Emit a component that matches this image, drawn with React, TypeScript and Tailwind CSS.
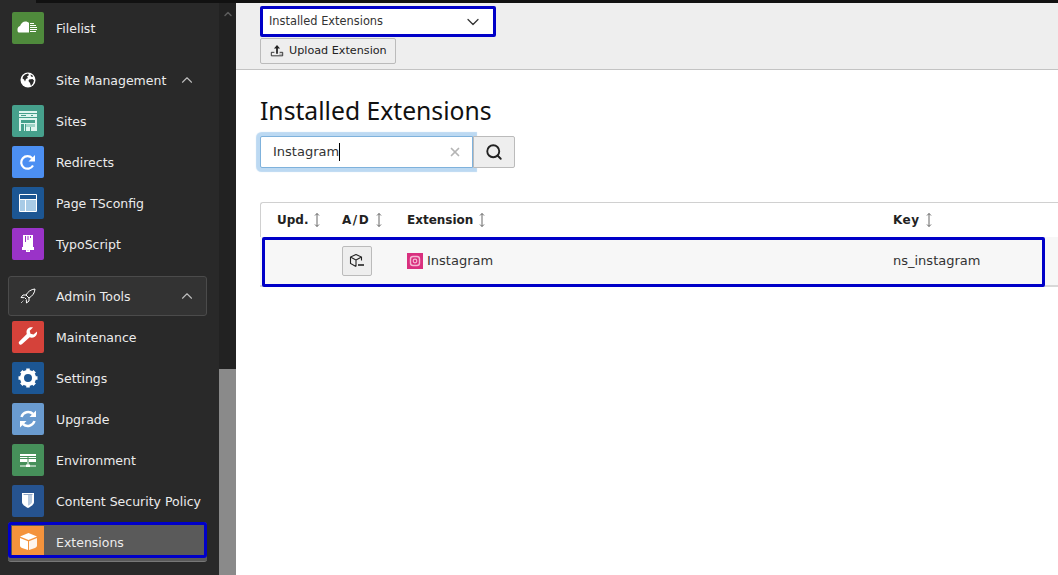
import React from "react";
import { ChevronDown, ChevronUp, Search, X } from "lucide-react";

const FilelistIcon = () => (
  <svg viewBox="0 0 32 32" className="size-8">
    <path fill="#fff" d="M7 20.500c-1.500 0-1.500-1.500-1.500-3 0-2 1-3 2.500-3.500C9 11.500 11 9.500 13.500 9.500c1.500 0 2.500.5 3.500 1.500v9.500z" />
    <path stroke="#fff" strokeWidth="1" d="M18 11.500h4M18 13.500h6M18 15.500h7M18 17.500h7M18 19.500h6" />
  </svg>
);

const SitesIcon = () => (
  <svg viewBox="0 0 32 32" className="size-8">
    <path fill="#dff5ef" d="M7 6h18v6H7z" />
    <path stroke="#46a08c" strokeWidth="1" d="M7 8.500h18M9 10.500h5M19 10.500h2" />
    <path fill="#dff5ef" d="M7 13h18v13H7z" />
    <path fill="#46a08c" d="M9 15h14v3H9zM9 19h3v7H9zM13 19h1v7h-1z" />
    <path fill="#9fd4c8" d="M14 19h9v3h-9z" />
    <path fill="#46a08c" d="M18 22h1v4h-1z" />
  </svg>
);

const RedirectsIcon = () => (
  <svg viewBox="0 0 32 32" className="size-8" fill="none">
    <path stroke="#fff" strokeWidth="2.200" d="M21 19.500a6.300 6.300 0 1 1-.8-7.300" />
    <path fill="#fff" d="M23 9v6.500h-6.500z" />
  </svg>
);

const TsconfigIcon = () => (
  <svg viewBox="0 0 32 32" className="size-8" fill="none">
    <path fill="#a8cbe6" d="M8 13h5v11H8zM14 13h10v11H14z" />
    <path stroke="#fff" strokeWidth="1" d="M7.500 7.500h17v17h-17zM7.500 12.500h17M13.500 12.500v12" />
  </svg>
);

const TypoScriptIcon = () => (
  <svg viewBox="0 0 32 32" className="size-8">
    <path fill="#fff" d="M11 7h10v12h1v3h-4v2h-4v-2h-4v-3h1z" />
    <path fill="#9a33c8" d="M13 8h1v6h-1zM15.500 8h1v4h-1zM18 8h1v2h-1zM15.500 22.500h1v.5h-1z" />
  </svg>
);

const MaintenanceIcon = () => (
  <svg viewBox="0 0 32 32" className="size-8">
    <path fill="#fff" d="M25 10.500l-3.500 3-3-.8-.8-3 3.300-3.200c-3-1-6.500 1.200-6.500 4.500 0 .8.100 1.300.3 1.900L7.300 20.500c-1.700 1.600.8 4.400 2.600 2.800l7.800-7c2.800 1 6.300-.3 7.200-3.300.2-.7.200-1.700.1-2.500z" />
  </svg>
);

const SettingsIcon = () => (
  <svg viewBox="0 0 32 32" className="size-8" fill="none">
    <circle cx="16" cy="16" r="6" stroke="#fff" strokeWidth="4" />
    <path stroke="#fff" strokeWidth="3.500" d="M16 6.500v3M16 22.500v3M6.500 16h3M22.500 16h3M9.300 9.300l2 2M20.700 20.700l2 2M22.700 9.300l-2 2M11.300 20.700l-2 2" />
  </svg>
);

const UpgradeIcon = () => (
  <svg viewBox="0 0 32 32" className="size-8" fill="none">
    <path stroke="#fff" strokeWidth="2.500" d="M9.500 14a7 7 0 0 1 11.500-3M22.500 18a7 7 0 0 1-11.500 3" />
    <path fill="#fff" d="M24 7.500v6.500h-6.500zM8 24.500V18h6.500z" />
  </svg>
);

const EnvironmentIcon = () => (
  <svg viewBox="0 0 32 32" className="size-8">
    <path fill="#fff" d="M8 10h16v8H8z" />
    <path stroke="#46905a" strokeWidth="1" d="M8 12.500h16M8 14.500h16M16 12v6" />
    <path fill="#fff" d="M15.500 18h1v3h-1zM8 21.500h16v1H8zM14 20.500h4v2.500h-4z" />
  </svg>
);

const ShieldIcon = () => (
  <svg viewBox="0 0 32 32" className="size-8">
    <path fill="#fff" d="M10 8h12v9c0 2.500-3 4.500-6 6-3-1.500-6-3.500-6-6z" />
    <path fill="#b9cbe0" d="M16 10h4v7c0 1.300-2 2.700-4 3.700z" />
    <path fill="#26538f" d="M11.500 9.500h9v.5h-9z" />
  </svg>
);

const ExtensionsIcon = () => (
  <svg viewBox="0 0 32 32" className="size-8">
    <path fill="#fff" d="M16.500 7l8.500 3.500-8.500 3.500L8 10.500z" />
    <path fill="#fff" d="M8 12l8 3.300V24l-6-2c-1.200-.4-2-1.300-2-2.500z" />
    <path fill="#fff" opacity=".9" d="M25 12l-8 3.300V24l6-2c1.200-.4 2-1.300 2-2.500z" />
  </svg>
);

const GlobeIcon = () => (
  <svg viewBox="0 0 16 16" className="size-4">
    <circle cx="8" cy="8" r="7.500" fill="#fff" />
    <path fill="#292929" d="M3 4.500l2-2 3-1 1 1.500-2 1.500 1 1.500-2 1-1 2.500-1-2-1.500-1zM9 7.500l3.500-.5 1.500 1.500-1 3-2 2.500-1-3-1.500-2zM10.500 2.500l2 1 .5 1.500-2-.5z" />
  </svg>
);

const RocketIcon = () => (
  <svg viewBox="0 0 16 16" className="size-4" fill="none" stroke="#fff" strokeWidth="1">
    <path d="M15 1c-4 .3-7 2.500-9 6l3 3c3.500-2 5.700-5 6-9zM6 7H3L1 9.500l3 .2M9 10v3l-2.500 2-.2-3M4.500 9.500l2 2" />
    <path strokeDasharray="1 1" d="M1 15l3-3" />
  </svg>
);

const UploadIcon = () => (
  <svg viewBox="0 0 16 16" className="size-3.5 shrink-0">
    <path fill="#222" d="M8 1l3.500 4H9v6H7V5H4.500z" />
    <path fill="none" stroke="#222" d="M5 9.500H1.500v4h13v-4H11" />
    <path fill="#222" d="M11 11h1v1h-1zM13 11h1v1h-1z" />
  </svg>
);

const SortIcon = () => (
  <svg viewBox="0 0 8 16" className="ml-[5px] h-4 w-2" fill="none" stroke="#666" strokeWidth="1">
    <path d="M4 1.500v13M2 3.500l2-2 2 2M2 12.500l2 2 2-2" />
  </svg>
);

const DeactivateIcon = () => (
  <svg viewBox="0 0 16 16" className="size-4" fill="none" stroke="#222" strokeWidth="1.100">
    <path d="M7 1.500l5.500 2.500v3.500M7 1.500L1.500 4v6.500L7 13.500M1.500 4L7 7v6.500M7 7l5.500-3" />
    <path strokeWidth="1.600" d="M9 12h6" />
  </svg>
);

const InstagramIcon = () => (
  <svg viewBox="0 0 16 16" className="size-4 shrink-0">
    <rect width="16" height="16" fill="#d9307f" />
    <rect x="3.500" y="3.500" width="9" height="9" rx="2.500" fill="none" stroke="#f5b8d3" strokeWidth="1.400" />
    <circle cx="8" cy="8" r="1.800" fill="none" stroke="#f5b8d3" strokeWidth="1.200" />
  </svg>
);

type ModuleItem = { label: string; bg: string; icon: React.ReactNode };

const siteModules: ModuleItem[] = [
  { label: "Sites", bg: "bg-[#46a08c]", icon: <SitesIcon /> },
  { label: "Redirects", bg: "bg-[#4c8ff2]", icon: <RedirectsIcon /> },
  { label: "Page TSconfig", bg: "bg-[#1c5693]", icon: <TsconfigIcon /> },
  { label: "TypoScript", bg: "bg-[#9a33c8]", icon: <TypoScriptIcon /> },
];

const adminModules: ModuleItem[] = [
  { label: "Maintenance", bg: "bg-[#d5423a]", icon: <MaintenanceIcon /> },
  { label: "Settings", bg: "bg-[#1c5693]", icon: <SettingsIcon /> },
  { label: "Upgrade", bg: "bg-[#6a9bcf]", icon: <UpgradeIcon /> },
  { label: "Environment", bg: "bg-[#46905a]", icon: <EnvironmentIcon /> },
  { label: "Content Security Policy", bg: "bg-[#26538f]", icon: <ShieldIcon /> },
];

const ModuleRow = ({ item }: { item: ModuleItem }) => (
  <div className="flex h-10 items-center gap-3 pl-1">
    <div className={`size-8 shrink-0 rounded-[2px] ${item.bg}`}>{item.icon}</div>
    <span className="pt-[2px] text-[12.5px] whitespace-nowrap text-[#ececec]">{item.label}</span>
  </div>
);

const GroupHeader = ({ label, icon, boxed }: { label: string; icon: React.ReactNode; boxed?: boolean }) => (
  <div
    className={`mt-[11px] flex h-10 items-center rounded-[3px] border pl-[3px] ${
      boxed ? "border-[#4b4b4b] bg-[#333333]" : "border-transparent"
    }`}
  >
    <div className="flex size-8 shrink-0 items-center justify-center">{icon}</div>
    <span className="ml-3 pt-[2px] text-[12.5px] text-[#ececec]">{label}</span>
    <ChevronUp className="mr-[10px] ml-auto size-[18px] text-[#bdbdbd]" strokeWidth={1.5} />
  </div>
);

const Sidebar = () => (
  <aside className="flex w-[236px] shrink-0 bg-[#222222]">
    <nav className="flex w-[219px] flex-col gap-px overflow-hidden bg-[#292929] pt-2 pr-3 pl-2">
      <div className="flex h-10 items-center gap-3 pl-1">
        <div className="size-8 shrink-0 rounded-[2px] bg-[#4f8a3c]">
          <FilelistIcon />
        </div>
        <span className="pt-[2px] text-[12.5px] text-[#ececec]">Filelist</span>
      </div>
      <GroupHeader label="Site Management" icon={<GlobeIcon />} />
      {siteModules.map((item) => (
        <ModuleRow key={item.label} item={item} />
      ))}
      <GroupHeader label="Admin Tools" icon={<RocketIcon />} boxed />
      {adminModules.map((item) => (
        <ModuleRow key={item.label} item={item} />
      ))}
      <div className="relative flex h-10 items-center gap-3 rounded-[3px] border-b border-[#777777] bg-[#5a5a5a] pl-1">
        <div className="mt-1 h-[29px] w-8 shrink-0 self-start bg-[#f4933c]">
          <ExtensionsIcon />
        </div>
        <span className="pt-1 text-[12.5px] text-[#ececec]">Extensions</span>
        <div className="absolute top-0 right-0 left-0 h-9 rounded-[3px] border-[3px] border-[#0000c8]" />
      </div>
    </nav>
    <div className="flex w-[17px] flex-col bg-[#222222]">
      <div className="h-[369px] shrink-0 pt-2 pl-[3px]">
        <ChevronUp className="size-3 text-[#5c5c5c]" strokeWidth={3} />
      </div>
      <div className="flex-1 bg-[#8a8a8a]" />
    </div>
  </aside>
);

const TopBar = () => (
  <div className="flex h-[67px] flex-col border-b border-[#c3c3c3] bg-[#eeeeee] pt-[3px] pl-6">
    <div className="flex h-[31px] w-[236px] items-center justify-between rounded-[2px] border-[3px] border-[#0000c8] bg-white pr-[10px] pl-[6px] text-[11.4px] text-[#333333]">
      <span>Installed Extensions</span>
      <ChevronDown className="size-5 text-[#333333]" strokeWidth={1.5} />
    </div>
    <button className="mt-px flex h-[26px] w-[136px] items-center gap-[5px] rounded-[2px] border border-[#bbbbbb] bg-[#eeeeee] pl-[9px] text-[11.2px] text-[#222222]">
      <UploadIcon />
      <span>Upload Extension</span>
    </button>
  </div>
);

const SearchBox = () => (
  <div className="mt-2 flex h-8 w-[255px]">
    <div className="flex w-[213px] items-center justify-between rounded-l-[2px] border border-[#7fb2dc] bg-white pr-[10px] pl-[12px] text-[13px] text-[#333333] shadow-[0_0_1px_4px_#bcd9f2]">
      <span className="border-r border-black leading-[18px]">Instagram</span>
      <X className="size-[14px] text-[#b5b5b5]" strokeWidth={3} />
    </div>
    <button className="relative flex w-[42px] items-center justify-center rounded-r-[2px] border border-[#bbbbbb] bg-[#eeeeee]">
      <Search className="size-[18px] text-[#222222]" strokeWidth={2.5} />
    </button>
  </div>
);

const HeaderCell = ({ label, className }: { label: string; className: string }) => (
  <div className={`flex items-center text-[12px] font-bold text-[#222222] ${className}`}>
    <span>{label}</span>
    <SortIcon />
  </div>
);

const ExtensionTable = () => (
  <div className="mt-[34px] rounded-tl-[3px] border-t border-l border-[#d0d0d0]">
    <div className="flex h-[34px] items-center pl-4">
      <HeaderCell label="Upd." className="w-[65px]" />
      <HeaderCell label="A/D" className="w-[65px] tracking-[1.5px]" />
      <HeaderCell label="Extension" className="w-[486px]" />
      <HeaderCell label="Key" className="w-[100px] tracking-[0.5px]" />
    </div>
    <div className="relative -ml-px flex h-[50px] items-center border-b-2 border-[#d8d8d8] bg-[#f7f7f7] pl-[17px] text-[13px] text-[#333333]">
      <div className="w-[65px]" />
      <div className="w-[65px]">
        <button className="flex h-[30px] w-[30px] items-center justify-center rounded-[2px] border border-[#bbbbbb] bg-[#eeeeee]">
          <DeactivateIcon />
        </button>
      </div>
      <div className="flex w-[486px] items-center gap-1">
        <InstagramIcon />
        <span>Instagram</span>
      </div>
      <div>ns_instagram</div>
      <div className="absolute top-0 bottom-[-2px] left-[2px] w-[783px] rounded-[2px] border-[3px] border-[#0000c8]" />
    </div>
  </div>
);

export default function App() {
  return (
    <div className="relative flex h-[575px] w-[1058px] overflow-hidden bg-white font-['DejaVu_Sans',sans-serif]">
      <div className="absolute top-0 left-9 z-10 h-[3px] w-[1022px] bg-[#111111]" />
      <Sidebar />
      <main className="flex min-w-0 flex-1 flex-col pt-[3px]">
        <TopBar />
        <div className="pt-6 pl-6">
          <h1 className="font-['Noto_Sans',sans-serif] text-[24.7px] leading-[34px] text-[#111111]">Installed Extensions</h1>
          <SearchBox />
          <ExtensionTable />
        </div>
      </main>
    </div>
  );
}
